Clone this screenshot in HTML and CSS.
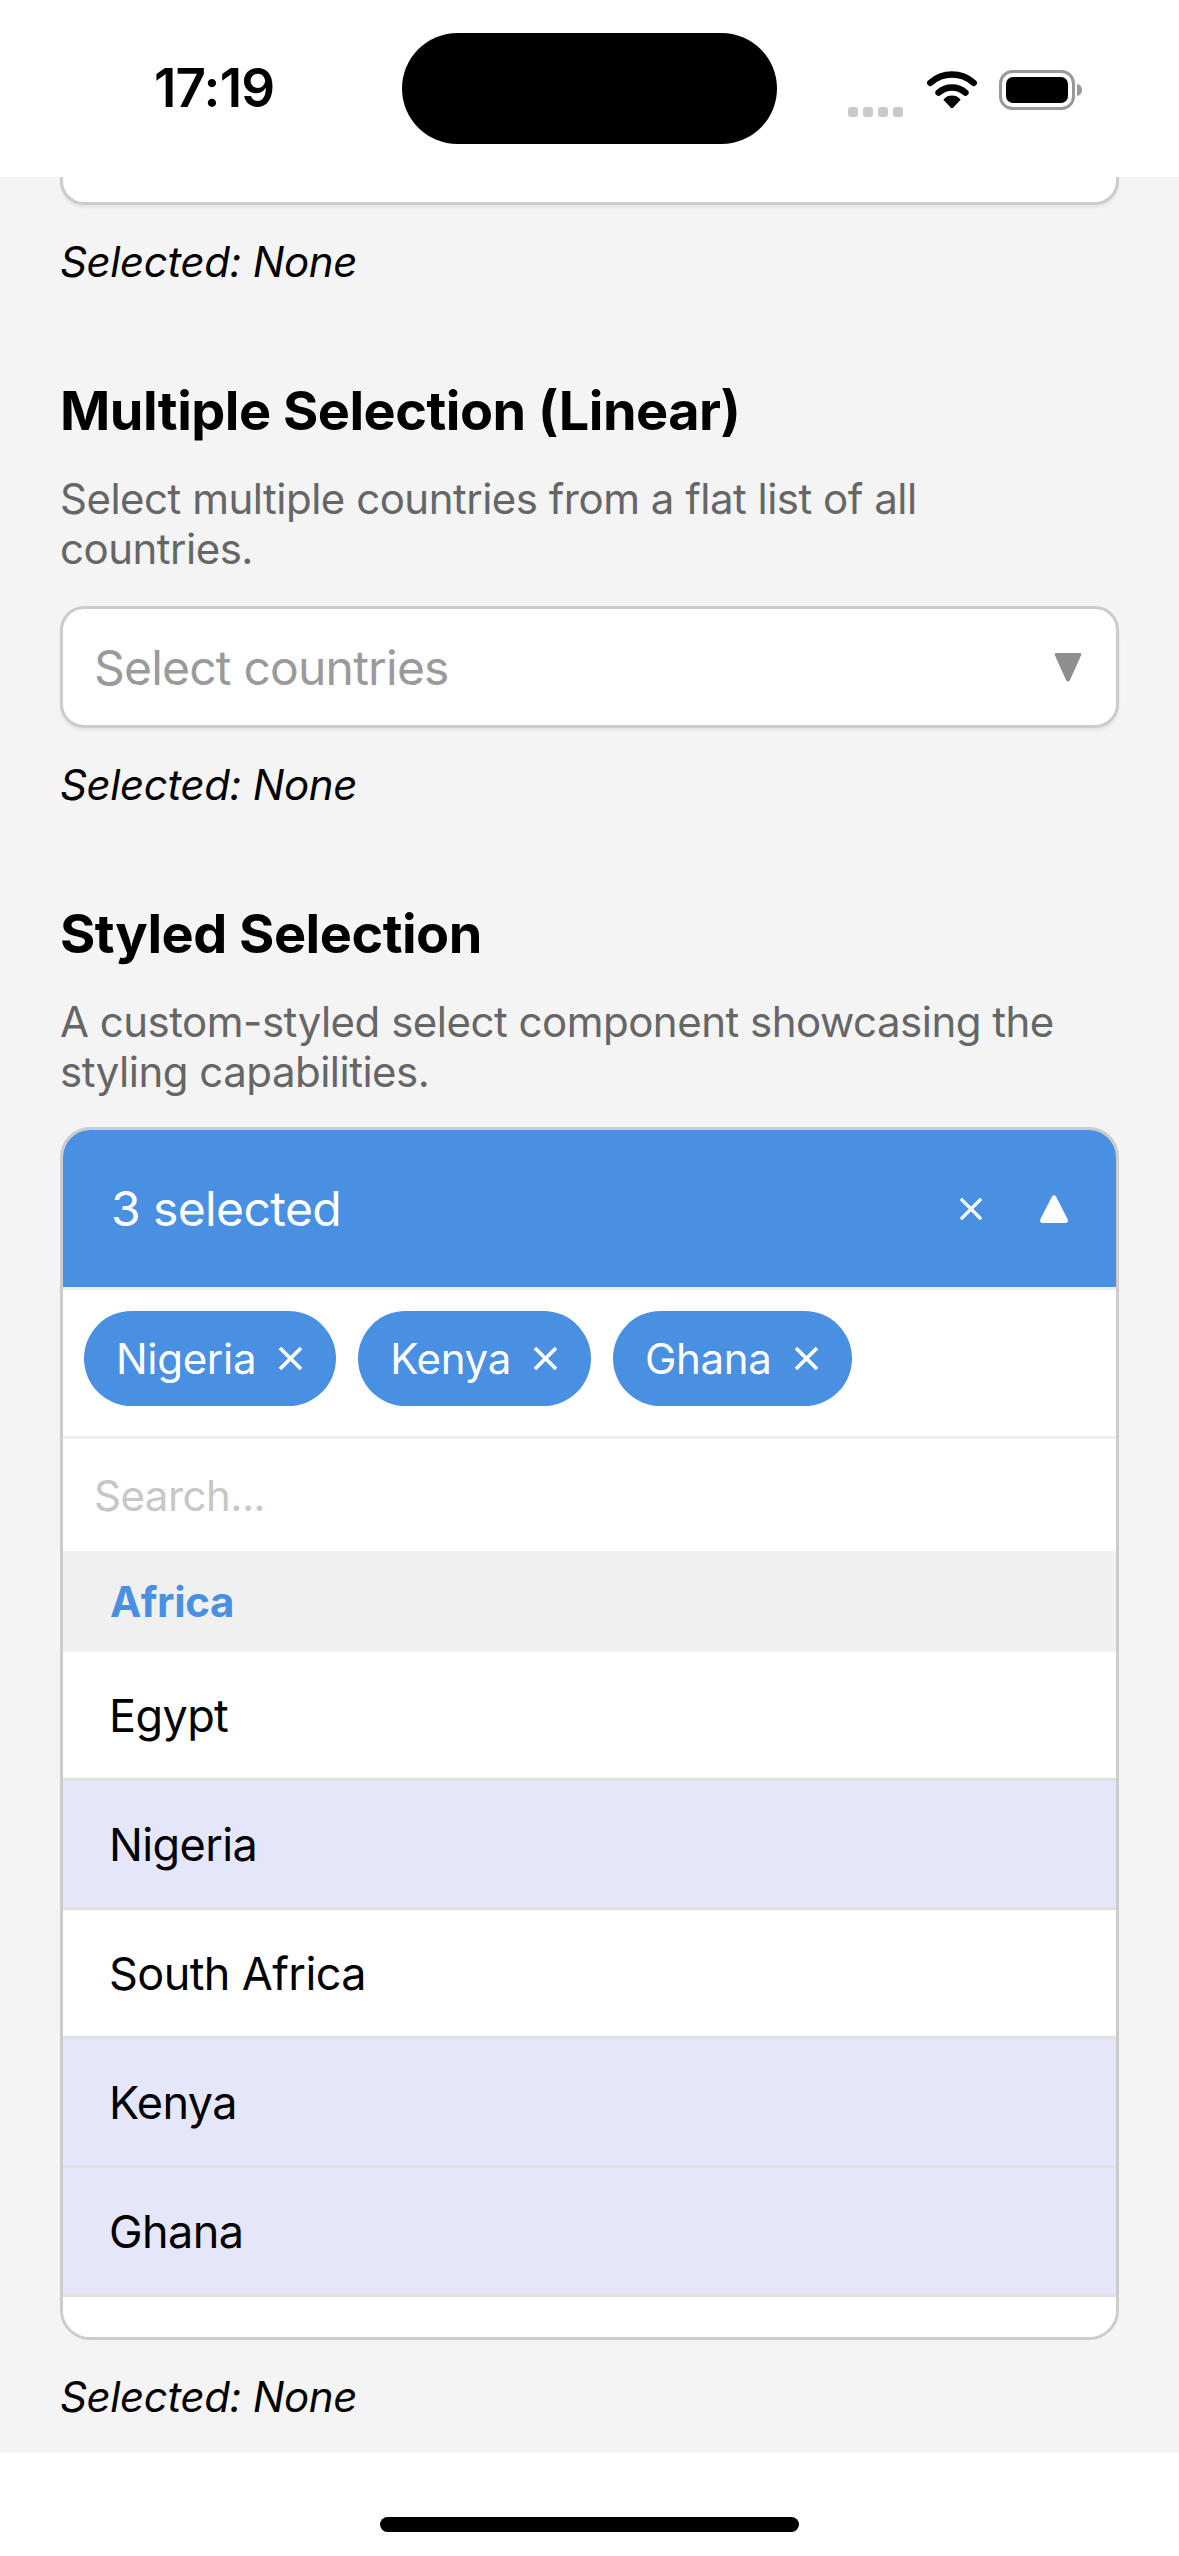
FILE: index.html
```html
<!DOCTYPE html>
<html lang="en">
<head>
<meta charset="utf-8">
<title>Select Demo</title>
<link rel="stylesheet" href="styles.css">
</head>
<body>
<div class="phone">
  <header class="status-bar">
    <span class="time">17:19</span>
    <div class="island"></div>
    <div class="status-icons">
      <div class="signal"><i></i><i></i><i></i><i></i></div>
      <svg class="wifi" width="50" height="37" viewBox="0 0 50 37">
        <path d="M3.3 11.8 A32.5 32.5 0 0 1 46.7 11.8" fill="none" stroke="#000" stroke-width="6.5" stroke-linecap="round"/>
        <path d="M11.6 21.6 A20 20 0 0 1 38.4 21.6" fill="none" stroke="#000" stroke-width="6.5" stroke-linecap="round"/>
        <path d="M25 36.5 L17.6 28.6 A10.5 10.5 0 0 1 32.4 28.6 Z" fill="#000" stroke="#000" stroke-width="2" stroke-linejoin="round"/>
      </svg>
      <svg class="battery" width="84" height="40" viewBox="0 0 84 40">
        <rect x="1.5" y="1.5" width="73" height="37" rx="12" fill="none" stroke="#999" stroke-width="3"/>
        <rect x="7" y="7" width="62" height="26" rx="7" fill="#000"/>
        <path d="M78 14 Q83 15 83 20 Q83 25 78 26 Z" fill="#999"/>
      </svg>
    </div>
  </header>

  <main class="scroll">
    <section class="demo demo-first">
      <div class="select select-cut"></div>
      <p class="selected">Selected: None</p>
    </section>

    <section class="demo">
      <h2 class="demo-title">Multiple Selection (Linear)</h2>
      <p class="demo-desc">Select multiple countries from a flat list of all<br>countries.</p>
      <div class="select">
        <span class="placeholder">Select countries</span>
        <svg class="caret" width="30" height="32" viewBox="0 0 30 32"><path d="M3 2 H27 Q29 2 28 4.5 L17 29 Q15 32 13 29 L2 4.5 Q1 2 3 2 Z" fill="#8e8e8e"/></svg>
      </div>
      <p class="selected">Selected: None</p>
    </section>

    <section class="demo">
      <h2 class="demo-title">Styled Selection</h2>
      <p class="demo-desc">A custom-styled select component showcasing the<br>styling capabilities.</p>
      <div class="styled">
        <div class="styled-head">
          <span class="head-label">3 selected</span>
          <div class="head-actions">
            <svg class="clear" width="22" height="22" viewBox="0 0 22 22"><path d="M2 2 L20 20 M20 2 L2 20" stroke="#fff" stroke-width="3.2" stroke-linecap="square"/></svg>
            <svg class="caret-up" width="30" height="30" viewBox="0 0 30 30"><path d="M13 2.5 Q15 0 17 2.5 L28.5 25 Q30 29 26 29 H4 Q0 29 1.5 25 Z" fill="#fff"/></svg>
          </div>
        </div>
        <div class="tags">
          <span class="tag">Nigeria <svg class="tag-x" width="25" height="25" viewBox="0 0 25 25"><path d="M2 2 L23 23 M23 2 L2 23" stroke="#fff" stroke-width="3.8"/></svg></span>
          <span class="tag">Kenya <svg class="tag-x" width="25" height="25" viewBox="0 0 25 25"><path d="M2 2 L23 23 M23 2 L2 23" stroke="#fff" stroke-width="3.8"/></svg></span>
          <span class="tag">Ghana <svg class="tag-x" width="25" height="25" viewBox="0 0 25 25"><path d="M2 2 L23 23 M23 2 L2 23" stroke="#fff" stroke-width="3.8"/></svg></span>
        </div>
        <div class="search">Search...</div>
        <div class="options">
          <div class="group">Africa</div>
          <div class="option">Egypt</div>
          <div class="option option-selected">Nigeria</div>
          <div class="option">South Africa</div>
          <div class="option option-selected">Kenya</div>
          <div class="option option-selected">Ghana</div>
          <div class="option" aria-hidden="true"></div>
        </div>
      </div>
      <p class="selected">Selected: None</p>
    </section>
  </main>

  <footer class="home-bar"><div class="home-indicator"></div></footer>
</div>
</body>
</html>
```

FILE: styles.css
```css
* { box-sizing: border-box; }

html, body {
  margin: 0;
  padding: 0;
  background: #fff;
}

body {
  font-family: "Inter", "Noto Sans", sans-serif;
  color: #000;
}

.phone {
  width: 1179px;
  height: 2556px;
  display: flex;
  flex-direction: column;
  overflow: hidden;
  background: #fff;
}

/* ---------- status bar ---------- */
.status-bar {
  position: relative;
  height: 177px;
  flex: none;
  background: #fff;
  display: flex;
  align-items: center;
  justify-content: space-between;
  padding: 0 96px 0 154px;
}

.time {
  font-size: 53px;
  font-weight: 600;
  letter-spacing: -0.8px;
  line-height: 1;
}

.island {
  position: absolute;
  left: 402px;
  top: 33px;
  width: 375px;
  height: 111px;
  border-radius: 56px;
  background: #000;
}

.status-icons {
  display: flex;
  align-items: center;
  gap: 22px;
  padding-top: 2px;
}

.signal {
  display: flex;
  gap: 5px;
  align-items: flex-end;
  height: 37px;
  margin-right: 2px;
  margin-top: 18px;
}

.signal i {
  display: block;
  width: 10px;
  height: 10px;
  border-radius: 3px;
  background: #c9c9c9;
}

/* ---------- scroll area ---------- */
.scroll {
  flex: none;
  height: 2276px;
  background: #f4f4f4;
  overflow: hidden;
  padding: 0 60px;
}

.demo + .demo {
  margin-top: 92px;
}

.demo-title {
  margin: 0;
  font-size: 54px;
  line-height: 64px;
  font-weight: 700;
  letter-spacing: -0.5px;
}

.demo-desc {
  margin: 31px 0 0;
  font-size: 42px;
  line-height: 50px;
  letter-spacing: -0.5px;
  color: #666;
}

.selected {
  margin: 32px 0 0;
  font-size: 42px;
  line-height: 50px;
  letter-spacing: -0.4px;
  font-style: italic;
}

/* ---------- plain select ---------- */
.select {
  margin-top: 32px;
  height: 122px;
  background: #fff;
  border: 3px solid #cccccc;
  border-radius: 24px;
  box-shadow: 0 3px 3px rgba(0, 0, 0, 0.06);
  display: flex;
  align-items: center;
  justify-content: space-between;
  padding: 0 33px 0 31px;
}

.select-cut {
  margin-top: 0;
  height: 28px;
  border-top: none;
  border-radius: 0 0 24px 24px;
}

.placeholder {
  font-size: 48px;
  letter-spacing: -0.8px;
  color: #9a9a9a;
}

.caret {
  display: block;
}

/* ---------- styled select ---------- */
.styled {
  margin-top: 30px;
  height: 1213px;
  border: 3px solid #cccccc;
  border-radius: 30px;
  overflow: hidden;
  background: #fff;
  display: flex;
  flex-direction: column;
}

.styled-head {
  height: 160px;
  flex: none;
  background: #4a90e2;
  color: #fff;
  display: flex;
  align-items: center;
  justify-content: space-between;
  padding: 0 47px 0 48px;
  border-bottom: 3px solid #eeeeee;
}

.head-label {
  font-size: 48px;
  letter-spacing: -0.6px;
}

.head-actions {
  display: flex;
  align-items: center;
  gap: 57px;
}

.head-actions svg { display: block; }

.tags {
  height: 149px;
  flex: none;
  display: flex;
  align-items: flex-start;
  gap: 22px;
  padding: 21px 21px 0;
  border-bottom: 3px solid #eeeeee;
}

.tag {
  height: 95px;
  border-radius: 48px;
  background: #4a90e2;
  color: #fff;
  font-size: 42px;
  letter-spacing: -0.3px;
  display: flex;
  align-items: center;
  gap: 22px;
  padding: 0 33px 0 32px;
}

.tag-x { display: block; }

.search {
  height: 112px;
  flex: none;
  display: flex;
  align-items: center;
  padding-left: 31px;
  font-size: 42px;
  letter-spacing: -0.5px;
  color: #c7c7c7;
}

.options {
  flex: 1;
  overflow: hidden;
}

.group {
  height: 101px;
  display: flex;
  align-items: center;
  padding-left: 47px;
  background: #f0f0f0;
  color: #4a90e2;
  font-size: 42px;
  font-weight: 700;
  letter-spacing: -0.3px;
}

.option {
  height: 129px;
  display: flex;
  align-items: center;
  padding-left: 46px;
  font-size: 45px;
  letter-spacing: -0.6px;
  background: #fff;
  border-bottom: 3px solid #e0e0e0;
}

.option-selected {
  background: #e6e6fa;
}

/* ---------- home indicator ---------- */
.home-bar {
  flex: 1;
  background: #fff;
  display: flex;
  justify-content: center;
  padding-top: 64px;
}

.home-indicator {
  width: 419px;
  height: 15px;
  border-radius: 8px;
  background: #000;
}
```
